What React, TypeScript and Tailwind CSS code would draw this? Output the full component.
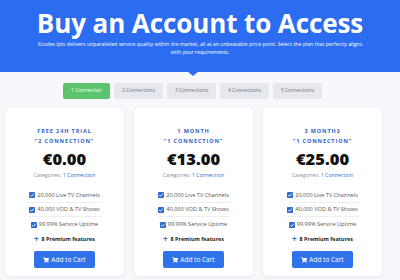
import React from "react";
import { FaShoppingCart } from "react-icons/fa";

const plans = [
  { t1: "FREE 24H TRIAL", t2: "\u201C2 CONNECTION\u201D", price: "\u20AC0.00" },
  { t1: "1 MONTH", t2: "\u201C1 CONNECTION\u201D", price: "\u20AC13.00" },
  { t1: "3 MONTHS", t2: "\u201C1 CONNECTION\u201D", price: "\u20AC25.00" },
];

const features = ["20,000 Live TV Channels", "40,000 VOD & TV Shows", "99.99% Service Uptime"];

function Check() {
  return (
    <svg width="6" height="6" viewBox="0 0 6 6" className="shrink-0">
      <rect x="0" y="0" width="6" height="6" rx="0.8" fill="#2f6ec8" />
      <path d="M1.3 3.1 L2.5 4.3 L4.8 1.7" stroke="#fff" strokeWidth="0.9" fill="none" />
    </svg>
  );
}

export default function App() {
  const tabs = ["1 Connection", "2 Connections", "3 Connections", "4 Connections", "5 Connections"];
  return (
    <div className="w-[400px] h-[280px] overflow-hidden bg-[#f6f8fb]" style={{ fontFamily: '"Open Sans", "Noto Sans", sans-serif' }}>
      <div className="relative bg-[#2b6cf0] h-[72px] flex flex-col items-center">
        <h1 className="text-white font-bold text-[26px] leading-none mt-[10px] tracking-[-0.1px]">Buy an Account to Access</h1>
        <p className="text-white text-[5.2px] leading-[8px] text-center mt-[4px] w-[334px]">
          Xcodes Iptv delivers unparalleled service quality within the market, all at an unbeatable price point. Select the plan that perfectly aligns with your requirements.
        </p>
        <div className="absolute left-[187px] top-[71px] w-0 h-0 border-l-[6px] border-r-[6px] border-t-[5px] border-l-transparent border-r-transparent border-t-[#2b6cf0]" />
      </div>
      <div className="flex justify-center gap-[4px] mt-[11px] pr-[15px]">
        {tabs.map((t, i) => (
          <div
            key={t}
            className={
              "h-[16px] flex items-center justify-center text-[5px] rounded-[2px] " +
              (i === 0 ? "bg-[#5cc46c] text-white w-[47px]" : "bg-[#e6e8eb] text-[#6b7280] w-[49px]")
            }
          >
            {t}
          </div>
        ))}
      </div>
      <div className="flex gap-[10px] pl-[5px] mt-[9px]">
        {plans.map((p) => (
          <div key={p.price} className="w-[119px] h-[168px] bg-white rounded-[5px] shadow-[0_1px_4px_rgba(0,0,0,0.07)] flex flex-col items-center">
            <div className="mt-[18px] text-[#2c5fbf] font-bold text-[5.5px] tracking-[0.9px] leading-[10px] text-center">
              <div>{p.t1}</div>
              <div>{p.t2}</div>
            </div>
            <div className="text-[16.5px] font-extrabold text-[#111] leading-none mt-[5px]">{p.price}</div>
            <div className="text-[5.3px] text-[#8a8f98] mt-[4px]">
              Categories: <span className="text-[#2f6ec8]">1 Connection</span>
            </div>
            <div className="mt-[9px] w-[72px] flex flex-col">
              {features.map((f, i) => (
                <div key={f} className={"flex items-center justify-center gap-[2px] h-[14.5px] " + (i < 2 ? "border-b border-[#eceef1]" : "")}>
                  <Check />
                  <span className="text-[5.6px] text-[#555] whitespace-nowrap">{f}</span>
                </div>
              ))}
              <div className="flex items-center justify-center gap-[3px] h-[14.5px]">
                <span className="text-[#2f6ec8] font-bold text-[8px] leading-none">+</span>
                <span className="text-[5.4px] font-bold text-[#222]">8 Premium features</span>
              </div>
            </div>
            <button className="mt-[5px] w-[61px] h-[17px] bg-[#2f72ea] rounded-[2px] text-white text-[6.5px] flex items-center justify-center gap-[2px]">
              <FaShoppingCart className="w-[6px] h-[6px]" />
              Add to Cart
            </button>
          </div>
        ))}
      </div>
    </div>
  );
}
